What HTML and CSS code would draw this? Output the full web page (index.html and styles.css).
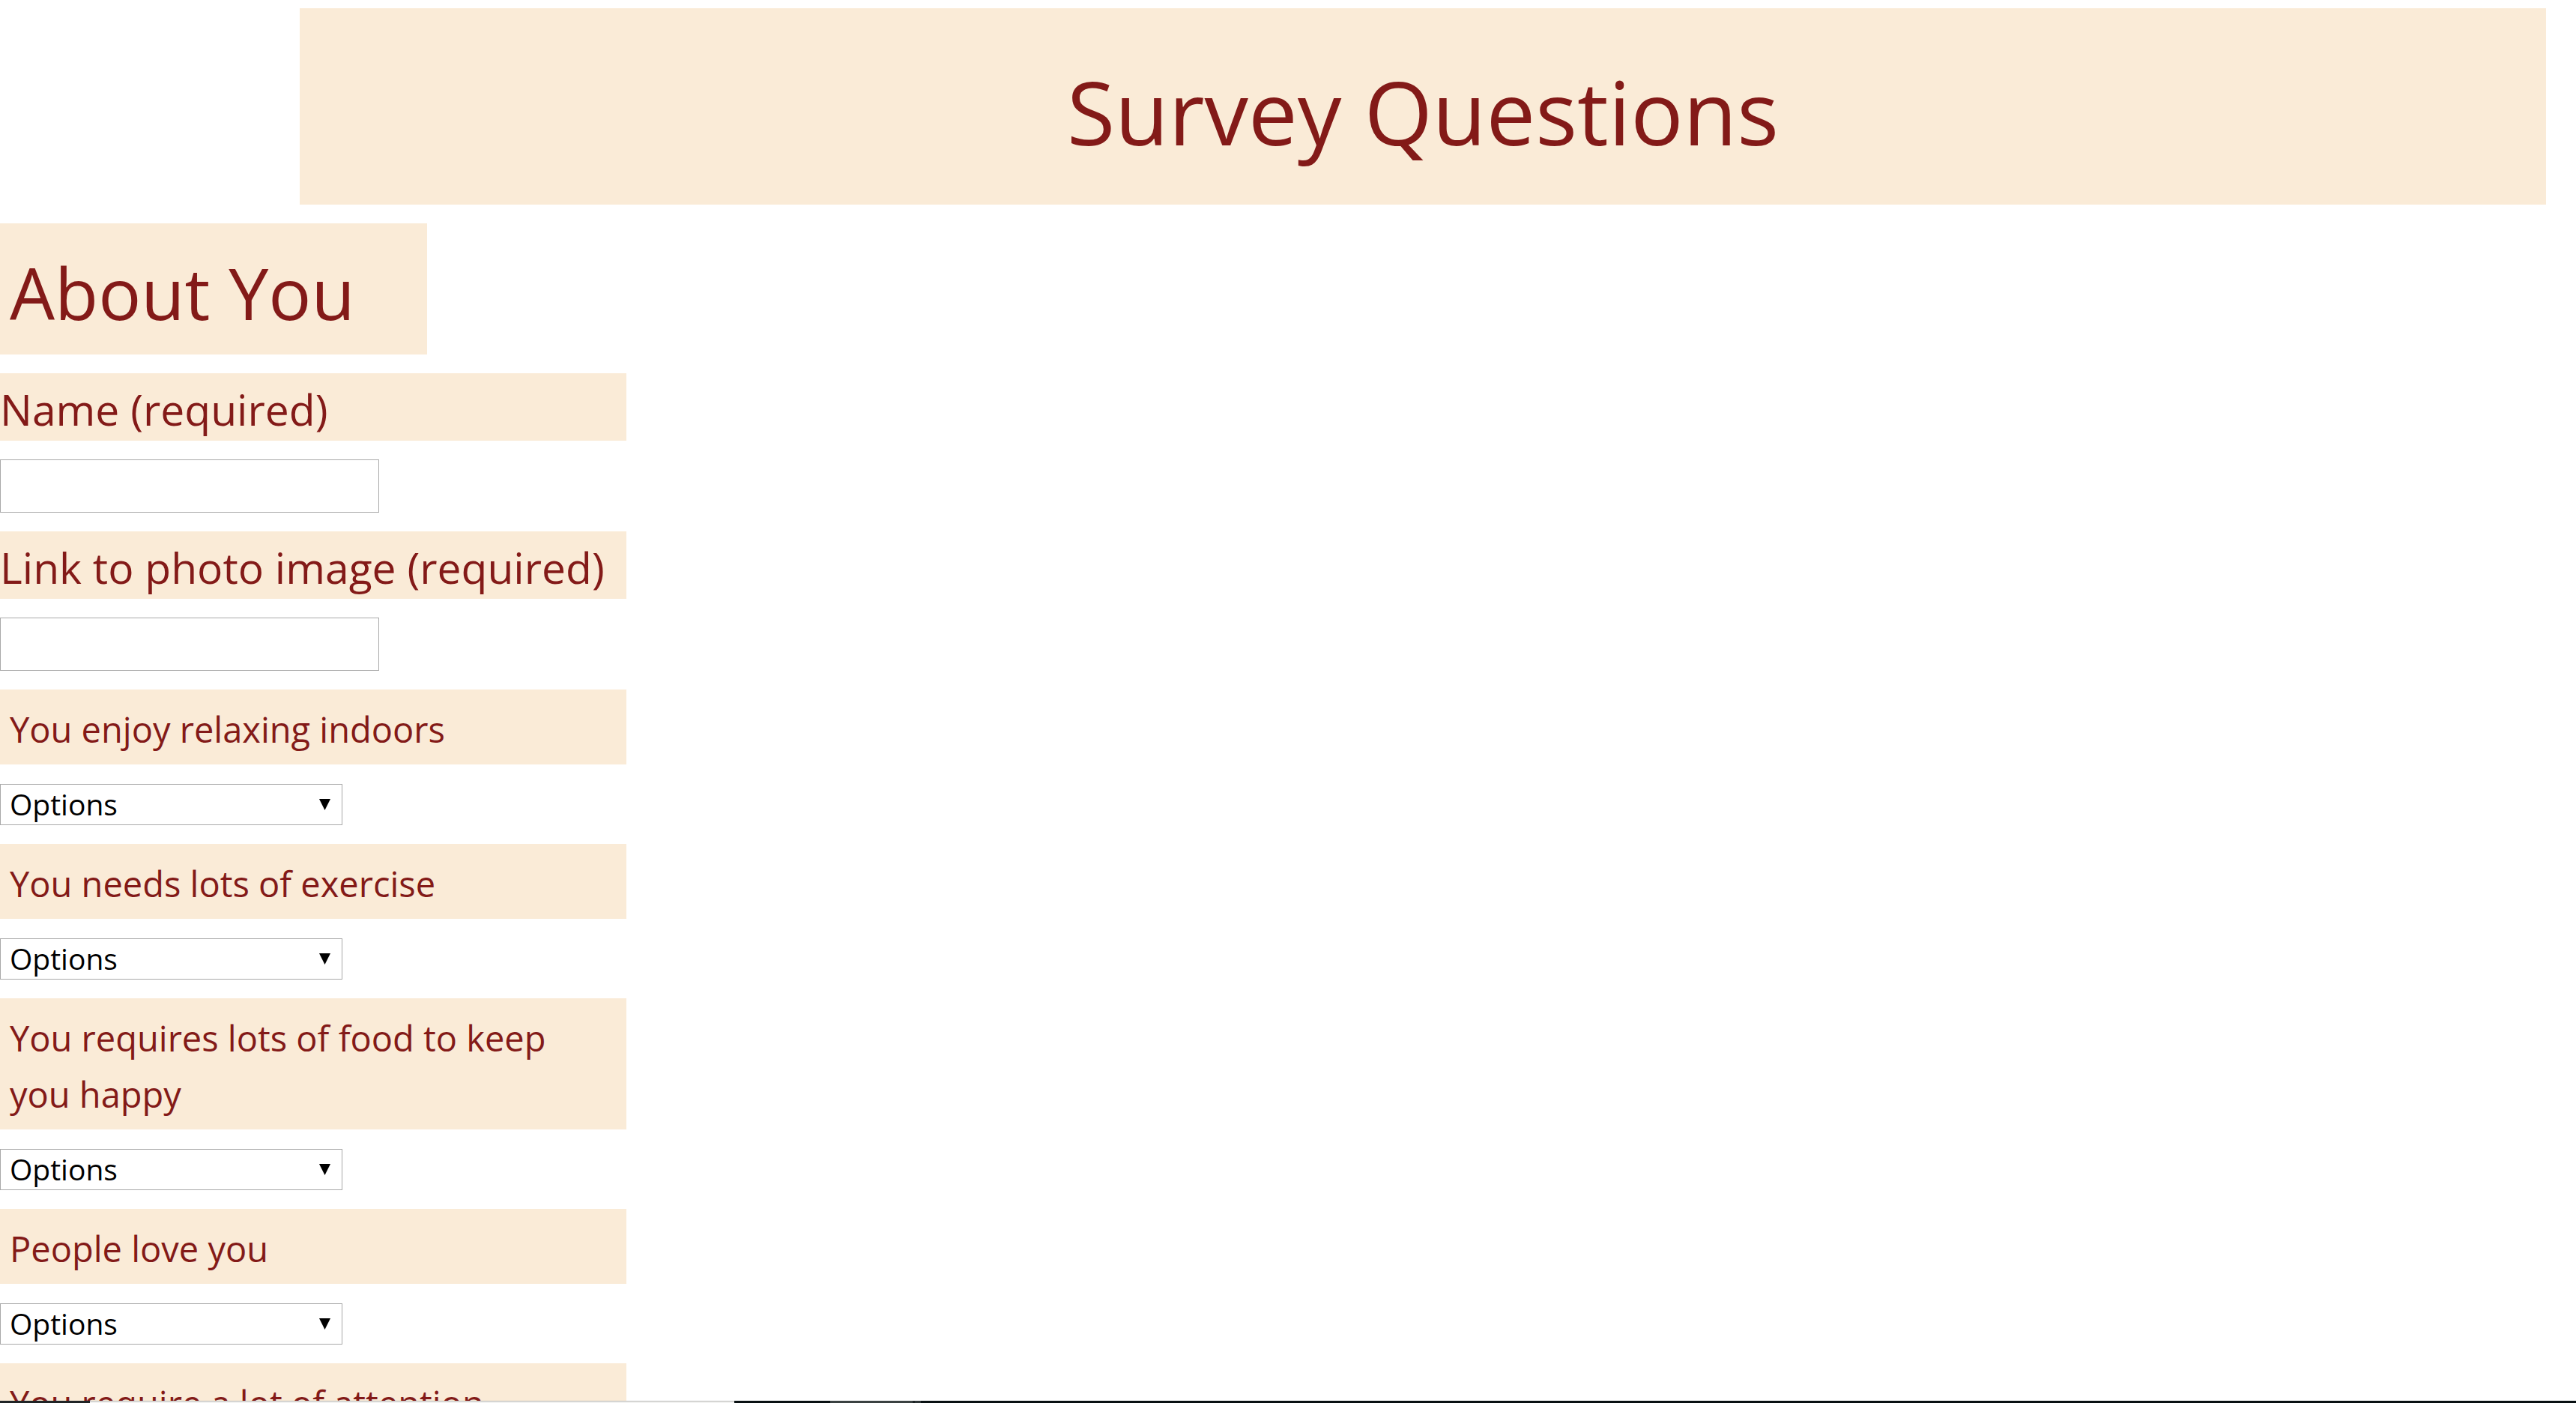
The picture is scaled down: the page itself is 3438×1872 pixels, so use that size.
FILE: index.html
```html
<!DOCTYPE html>
<html lang="en">
<head>
  <meta charset="utf-8">
  <title>Survey Questions</title>
  <link rel="stylesheet" href="styles.css">
</head>
<body>
  <header class="banner">
    <h1 class="banner-title">Survey Questions</h1>
  </header>

  <main class="survey">
    <h2 class="section-title">About You</h2>
    <form class="survey-form">
      <label class="field-label" for="name">Name (required)</label>
      <input class="text-field" type="text" id="name" required>

      <label class="field-label" for="photo">Link to photo image (required)</label>
      <input class="text-field" type="text" id="photo" required>

      <label class="question" for="q1">You enjoy relaxing indoors</label>
      <div class="picker"><select class="picker-select" id="q1"><option>Options</option></select></div>

      <label class="question" for="q2">You needs lots of exercise</label>
      <div class="picker"><select class="picker-select" id="q2"><option>Options</option></select></div>

      <label class="question" for="q3">You requires lots of food to keep you happy</label>
      <div class="picker"><select class="picker-select" id="q3"><option>Options</option></select></div>

      <label class="question" for="q4">People love you</label>
      <div class="picker"><select class="picker-select" id="q4"><option>Options</option></select></div>

      <label class="question" for="q5">You require a lot of attention</label>
      <div class="picker"><select class="picker-select" id="q5"><option>Options</option></select></div>
    </form>
  </main>

  <div class="bottom-bar" aria-hidden="true">
    <span class="bar-start"></span>
    <span class="bar-search"></span>
    <span class="bar-gap"></span>
    <span class="bar-active"></span>
    <span class="bar-divider"></span>
    <span class="bar-edge"></span>
  </div>
</body>
</html>
```
FILE: styles.css
```css
* {
  box-sizing: border-box;
}

body {
  margin: 0;
  height: 100vh;
  overflow: hidden;
  background: #fff;
  color: #831a18;
  font-family: "Segoe UI", "Open Sans", "Noto Sans", sans-serif;
}

.banner {
  margin: 11px 40px 25px 400px;
  padding: 44px 0 30px;
  background: #faebd7;
  text-align: center;
}

.banner-title {
  margin: 0;
  font-size: 117px;
  font-weight: 400;
  line-height: 188px;
}

.section-title {
  max-width: 570px;
  margin: 0 0 25px;
  padding: 17px 13px 8px;
  background: #faebd7;
  font-size: 95px;
  font-weight: 400;
  line-height: 150px;
}

.survey-form {
  display: flex;
  flex-direction: column;
  max-width: 836px;
}

.field-label {
  padding-top: 6px;
  background: #faebd7;
  font-size: 57px;
  line-height: 84px;
}

.text-field {
  width: 506px;
  height: 71px;
  margin: 25px 0;
  padding: 0 12px;
  border: 1px solid #a9a9a9;
  background: #fff;
  font: inherit;
  font-size: 39px;
}

.question {
  padding: 16px 60px 9px 13px;
  background: #faebd7;
  font-size: 47px;
  line-height: 75px;
}

.picker {
  display: grid;
  width: 457px;
  margin: 26px 0 25px;
  align-items: center;
}

.picker-select {
  grid-area: 1 / 1;
  height: 55px;
  padding: 0 12px 2px;
  appearance: none;
  border: 1px solid #a9a9a9;
  border-radius: 0;
  background: #fff;
  color: #000;
  font-family: "Open Sans", "Noto Sans", sans-serif;
  font-size: 39px;
  line-height: 51px;
}

.picker::after {
  content: "";
  grid-area: 1 / 1;
  justify-self: end;
  width: 15px;
  height: 15px;
  margin-right: 16px;
  background: #000;
  clip-path: polygon(0 0, 100% 0, 50% 100%);
  pointer-events: none;
}

.bottom-bar {
  position: fixed;
  right: 0;
  bottom: 0;
  left: 0;
  display: flex;
  height: 3px;
  background: #081012;
}

.bar-start {
  width: 120px;
  background: #1f2426;
}

.bar-search {
  width: 860px;
  border-top: 1px solid #b8b8b6;
  background: #f2f2f1;
}

.bar-gap {
  width: 128px;
}

.bar-active {
  width: 110px;
  background: #3a4141;
}

.bar-divider {
  width: 3px;
  background: #1c2324;
}

.bar-edge {
  width: 8px;
  background: #2c3335;
}
```
